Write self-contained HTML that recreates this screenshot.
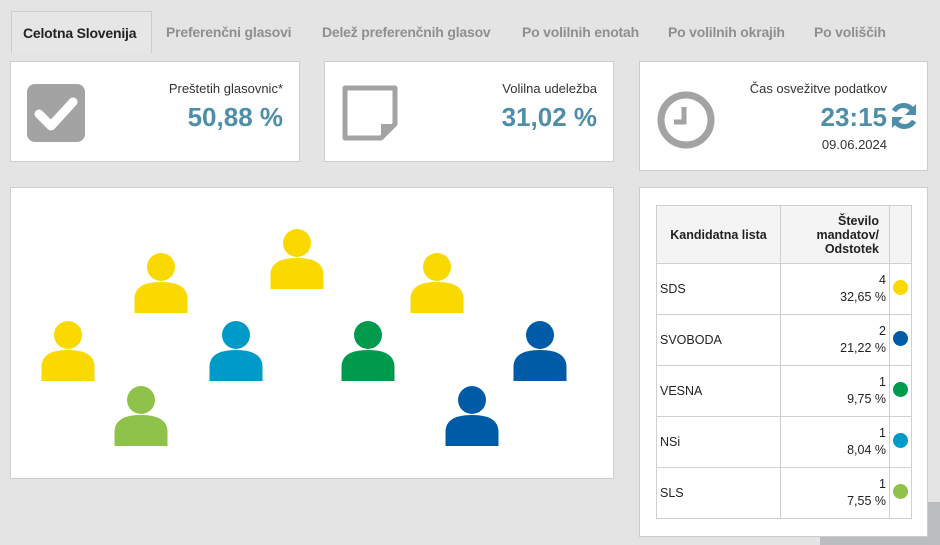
<!DOCTYPE html>
<html><head><meta charset="utf-8"><style>
*{box-sizing:border-box;margin:0;padding:0}
body{width:940px;height:545px;background:#e4e4e4;font-family:"Liberation Sans",sans-serif;position:relative;overflow:hidden;color:#222}
.tab{position:absolute;top:24px;font-size:14px;font-weight:bold;color:#8f8f8f;letter-spacing:-0.2px}
.act{position:absolute;left:11px;top:11px;width:141px;height:42px;border:1px solid #ccc;border-bottom:none;background:#e6e6e6;color:#222;font-weight:bold;font-size:14px;padding:13px 0 0 11px;letter-spacing:-0.2px}
.card{position:absolute;background:#fff;border:1px solid #ccc}
.lbl{position:absolute;right:16px;top:19px;font-size:13px;color:#333}
.val{position:absolute;right:16px;top:40px;font-size:26px;font-weight:bold;color:#4e8ea8}
.p{position:absolute}
table{position:absolute;left:656px;top:205px;border-collapse:collapse;font-size:12.5px}
td{border:1px solid #d0d0d0;height:51px;padding:0 3px}
th{border:1px solid #d0d0d0;background:#f4f4f4;font-size:12.5px;height:58px}
.r{text-align:right;line-height:17px}
.dot{width:15px;height:15px;border-radius:50%;display:inline-block}
</style></head><body>
<div style="position:absolute;left:820px;top:502px;width:120px;height:43px;background:#bbbcc0"></div>
<div class="act">Celotna Slovenija</div>
<div class="tab" style="left:166px">Preferenčni glasovi</div>
<div class="tab" style="left:322px">Delež preferenčnih glasov</div>
<div class="tab" style="left:522px">Po volilnih enotah</div>
<div class="tab" style="left:668px">Po volilnih okrajih</div>
<div class="tab" style="left:814px">Po voliščih</div>

<div class="card" style="left:10px;top:61px;width:290px;height:101px">
<svg style="position:absolute;left:16px;top:22px" width="58" height="58"><rect width="58" height="58" rx="8" fill="#a3a3a3"/><path d="M12 30 L24 42 L46 18" stroke="#fff" stroke-width="9" fill="none" stroke-linecap="round" stroke-linejoin="round"/></svg>
<div class="lbl">Preštetih glasovnic*</div><div class="val">50,88 %</div></div>

<div class="card" style="left:324px;top:61px;width:290px;height:101px">
<svg style="position:absolute;left:16px;top:22px" width="58" height="58"><path d="M4 4 H54 V40 L40 54 H4 Z" fill="none" stroke="#a3a3a3" stroke-width="5" stroke-linejoin="round"/><path d="M54 40 H40 V54 Z" fill="#a3a3a3"/></svg>
<div class="lbl">Volilna udeležba</div><div class="val">31,02 %</div></div>

<div class="card" style="left:639px;top:61px;width:289px;height:110px">
<svg style="position:absolute;left:16px;top:28px" width="60" height="60"><circle cx="30" cy="30" r="25" fill="none" stroke="#a3a3a3" stroke-width="7"/><path d="M28 17 V32 H18" stroke="#a3a3a3" stroke-width="5" fill="none"/></svg>
<div class="lbl" style="right:40px">Čas osvežitve podatkov</div>
<div class="val" style="right:40px">23:15</div>
<svg style="position:absolute;right:8px;top:39px" width="30" height="30" viewBox="0 0 30 30"><path d="M25 12 A11 11 0 0 0 5 10" stroke="#4e8ea8" stroke-width="5" fill="none"/><path d="M27 3 V14 H16 Z" fill="#4e8ea8"/><path d="M5 18 A11 11 0 0 0 25 20" stroke="#4e8ea8" stroke-width="5" fill="none"/><path d="M3 27 V16 H14 Z" fill="#4e8ea8"/></svg>
<div style="position:absolute;right:40px;top:75px;font-size:13px;color:#333">09.06.2024</div></div>

<div class="card" style="left:10px;top:187px;width:604px;height:292px"></div>
<div class="card" style="left:639px;top:187px;width:289px;height:350px"></div>

<svg class="p" style="left:0;top:0" width="940" height="545">
<defs><g id="pp"><circle cx="0" cy="0" r="14"/><path d="M-26.5 46 V32 Q-26.5 15 0 15 Q26.5 15 26.5 32 V46 Z"/></g></defs>
<use href="#pp" x="68" y="335" fill="#f9d900"/>
<use href="#pp" x="161" y="267" fill="#f9d900"/>
<use href="#pp" x="297" y="243" fill="#f9d900"/>
<use href="#pp" x="437" y="267" fill="#f9d900"/>
<use href="#pp" x="236" y="335" fill="#009ac9"/>
<use href="#pp" x="368" y="335" fill="#009a4c"/>
<use href="#pp" x="540" y="335" fill="#005ba6"/>
<use href="#pp" x="141" y="400" fill="#8fc24a"/>
<use href="#pp" x="472" y="400" fill="#005ba6"/>
</svg>

<table>
<tr><th style="width:124px">Kandidatna lista</th><th style="width:109px;text-align:right;padding-right:10px;line-height:14px">Število<br>mandatov/<br>Odstotek</th><th style="width:21px"></th></tr>
<tr><td>SDS</td><td class="r">4<br>32,65 %</td><td><span class="dot" style="background:#f9d900"></span></td></tr>
<tr><td>SVOBODA</td><td class="r">2<br>21,22 %</td><td><span class="dot" style="background:#005ba6"></span></td></tr>
<tr><td>VESNA</td><td class="r">1<br>9,75 %</td><td><span class="dot" style="background:#009a4c"></span></td></tr>
<tr><td>NSi</td><td class="r">1<br>8,04 %</td><td><span class="dot" style="background:#009ac9"></span></td></tr>
<tr><td>SLS</td><td class="r">1<br>7,55 %</td><td><span class="dot" style="background:#8fc24a"></span></td></tr>
</table>
</body></html>
